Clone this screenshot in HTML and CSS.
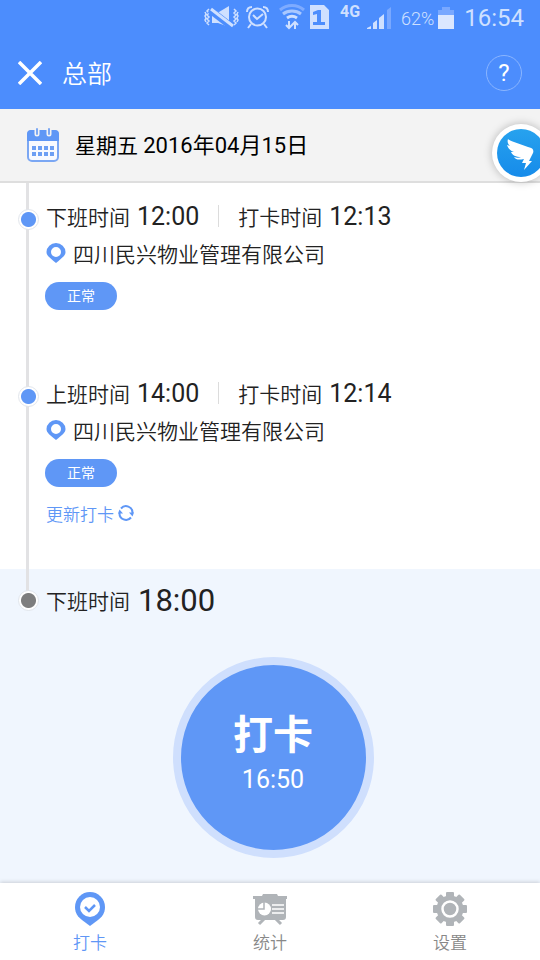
FILE: index.html
```html
<!DOCTYPE html>
<html lang="zh-CN">
<head>
<meta charset="utf-8">
<meta name="viewport" content="width=device-width, initial-scale=1">
<title>总部</title>
<link rel="stylesheet" href="styles.css">
</head>
<body>
<div class="app">
  <div class="status">
    <svg class="status-icons" width="200" height="36" viewBox="0 0 200 36" aria-hidden="true">
      <g fill="none" stroke="#cfe0ff" stroke-width="1.500">
        <path d="M14 9l-2 2 2 2-2 2 2 2-2 2 2 2-2 2 2 2M10 12l1 2-1 2 1 2-1 2 1 2"/>
        <path d="M39 9l2 2-2 2 2 2-2 2 2 2-2 2 2 2-2 2M43 12l-1 2 1 2-1 2 1 2-1 2"/>
      </g>
      <path d="M17 11v12h6l11 4V6l-10 6z" fill="#cfe0ff"/>
      <path d="M15 10l22 17" stroke="#4c8dfd" stroke-width="7"/>
      <path d="M16 9l22 17" stroke="#cfe0ff" stroke-width="3"/>
      <g fill="none" stroke="#cfe0ff" stroke-width="2">
        <circle cx="62.500" cy="17" r="8.500"/>
        <path d="M58 15l4 4 6-5M52 12c0-3 2-5 5-5M73 12c0-3-2-5-5-5M56 24l-3 4M69 24l3 4"/>
        <path d="M85 10c7-6 17-6 24 0" stroke="#7eabff" stroke-width="3"/>
        <path d="M88 14c5-4 13-4 18 0" stroke="#a9c8ff" stroke-width="3"/>
        <path d="M92 18c3-2 7-2 10 0" stroke-width="3"/>
        <path d="M94 21v7M91 25l3 3 3-3M100 29v-7M97 25l3-3 3 3"/>
      </g>
      <g fill="#cfe0ff">
        <path d="M115 29V5h14l5 5v19zM126 10h-3l-5 2v3l4-1v8h-4v3h12v-3h-4z" fill-rule="evenodd"/>
        <path d="M172 29v-1l4-2v3zM178 29v-6l4-3v9zM184 29V18l5-4v15z"/>
        <path d="M192 29V10l4-3v22z" fill="#79a8ff"/>
      </g>
      <text class="net" x="145" y="17">4G</text>
    </svg>
    <span class="percent">62%</span>
    <svg class="battery" width="16" height="24" viewBox="0 0 16 24" aria-hidden="true"><path d="M0 4h4V1h8v3h4v6H0z" fill="#79a8ff"/><path d="M0 9h16v14H0z" fill="#dbe7ff"/></svg>
    <span class="clock">16:54</span>
  </div>

  <header class="bar">
    <button class="icon-button" type="button" aria-label="关闭">
      <svg width="24" height="24" viewBox="0 0 24 24"><path d="M1 1l22 22M23 1L1 23" stroke="#fff" stroke-width="3.500"/></svg>
    </button>
    <h1>总部</h1>
    <button class="help" type="button" aria-label="帮助">?</button>
  </header>

  <div class="date">
    <svg width="32" height="34" viewBox="0 0 32 34" aria-hidden="true">
      <rect x="1" y="3" width="30" height="30" rx="4" fill="#f8faff" stroke="#7ba7f3" stroke-width="2"/>
      <path d="M0 13V6q0-4 4-4h24q4 0 4 4v7z" fill="#5f97f6"/>
      <path d="M10 1v5M22 1v5" stroke="#f3f3f3" stroke-width="5" stroke-linecap="round"/>
      <path d="M10 1v5M22 1v5" stroke="#7ba7f3" stroke-width="2" stroke-linecap="round"/>
      <path d="M5 20h4m2 0h4m2 0h4m2 0h4M5 26h4m2 0h4m2 0h4m2 0h4" stroke="#6d9ff4" stroke-width="4"/>
    </svg>
    <span class="day">星期五 <time datetime="2016-04-15">2016年04月15日</time></span>
    <button class="float" type="button" aria-label="钉钉">
      <svg width="48" height="48" viewBox="0 0 48 48">
        <defs><linearGradient id="sky" x1="0" y1="0" x2="0" y2="1"><stop offset="0" stop-color="#27a2ee"/><stop offset="1" stop-color="#168bea"/></linearGradient></defs>
        <circle cx="24" cy="24" r="24" fill="url(#sky)"/>
        <path d="M11 10c1 1 3 2 6 3l14 5c5 1 6 3 5 6l-4 8h3l-8 9 2-7h-4l2-4c-5 1-8 1-10-2 3 1 5 1 7 0-5 0-9-2-10-5l3 0c-4-1-6-4-7-7l3 1c-2-2-3-4-2-7z" fill="#fff"/>
      </svg>
    </button>
  </div>

  <main>
    <ol class="timeline">
      <li class="entry">
        <div class="rail"><span class="dot"></span></div>
        <div class="body">
          <div class="times"><span>下班时间</span><time>12:00</time><span class="split"></span><span>打卡时间</span><time>12:13</time></div>
          <div class="place"><svg width="20" height="20" viewBox="0 0 20 20" aria-hidden="true"><path d="M10 0a9.500 9 0 0 1 9.500 9c0 4-4 6-7 9l-2.500 2L7.500 18C4.500 15 .5 13 .5 9A9.500 9 0 0 1 10 0zM10 4a5 5 0 1 0 0 10 5 5 0 0 0 0-10z" fill="#5f97f6" fill-rule="evenodd"/></svg>四川民兴物业管理有限公司</div>
          <span class="tag">正常</span>
        </div>
      </li>
      <li class="entry">
        <div class="rail"><span class="dot"></span></div>
        <div class="body">
          <div class="times"><span>上班时间</span><time>14:00</time><span class="split"></span><span>打卡时间</span><time>12:14</time></div>
          <div class="place"><svg width="20" height="20" viewBox="0 0 20 20" aria-hidden="true"><path d="M10 0a9.500 9 0 0 1 9.500 9c0 4-4 6-7 9l-2.500 2L7.500 18C4.500 15 .5 13 .5 9A9.500 9 0 0 1 10 0zM10 4a5 5 0 1 0 0 10 5 5 0 0 0 0-10z" fill="#5f97f6" fill-rule="evenodd"/></svg>四川民兴物业管理有限公司</div>
          <span class="tag">正常</span>
          <button class="update" type="button">更新打卡<svg width="16" height="16" viewBox="0 0 16 16" aria-hidden="true"><path d="M3 3.500A6.500 6.500 0 0 1 14.500 8M13 12.500A6.500 6.500 0 0 1 1.500 8" fill="none" stroke="#5f97f6" stroke-width="2"/><path d="M11 7.500h5l-1.500 4zM5 8.500H0l1.500-4z" fill="#5f97f6"/></svg></button>
        </div>
      </li>
      <li class="entry next">
        <div class="rail"><span class="dot"></span></div>
        <div class="body">
          <div class="times"><span>下班时间</span><time>18:00</time></div>
        </div>
        <div class="punch-area">
          <button class="punch" type="button"><strong>打卡</strong><time>16:50</time></button>
        </div>
      </li>
    </ol>
  </main>

  <nav class="tabs">
    <a class="tab active" href="#punch">
      <svg width="34" height="36" viewBox="0 0 34 36" aria-hidden="true"><path d="M17 1a15 15 0 0 1 15 15c0 6-3 10-7 13l-8 6-8-6c-4-3-7-7-7-13A15 15 0 0 1 17 1z" fill="#5f97f6"/><circle cx="17" cy="16" r="10" fill="#fff"/><path d="M12 16l4 4 6-6" fill="none" stroke="#5f97f6" stroke-width="2.500"/></svg>
      <span>打卡</span>
    </a>
    <a class="tab" href="#stats">
      <svg width="34" height="36" viewBox="0 0 34 36" aria-hidden="true"><path d="M0 5h9l1-2h14l1 2h9v3h-1v18q0 3-3 3H5q-3 0-3-3V8H0z" fill="#b0b4b8"/><path d="M11 28l-5 5M23 28l5 5" stroke="#b0b4b8" stroke-width="3"/><circle cx="11.500" cy="18" r="6.500" fill="#fff"/><path d="M11 11v7H4" fill="none" stroke="#b0b4b8" stroke-width="1.500"/><path d="M19 14h12M19 18h12M19 22h12" stroke="#fff" stroke-width="1.500"/></svg>
      <span>统计</span>
    </a>
    <a class="tab" href="#settings">
      <svg width="34" height="36" viewBox="0 0 34 36" aria-hidden="true"><g fill="#b0b4b8"><circle cx="17" cy="18" r="13.500"/><g id="teeth"><rect x="13" y="1" width="8" height="34" rx="1"/><rect x="0" y="14" width="34" height="8" rx="1"/></g><use href="#teeth" transform="rotate(45 17 18)"/></g><circle cx="17" cy="18" r="7.500" fill="#b0b4b8" stroke="#fff" stroke-width="2.500"/></svg>
      <span>设置</span>
    </a>
  </nav>
</div>
</body>
</html>
```
FILE: styles.css
```css
* { box-sizing: border-box; }

body {
  margin: 0;
  font-family: Roboto, "Noto Sans CJK SC", sans-serif;
  color: #222;
  background: #fff;
}

button {
  border: 0;
  padding: 0;
  background: none;
  font: inherit;
  color: inherit;
}

svg { display: block; flex: none; }

.app {
  display: flex;
  flex-direction: column;
  min-height: 100vh;
  overflow: hidden;
}

.status {
  display: flex;
  align-items: center;
  justify-content: flex-end;
  height: 36px;
  padding-right: 16px;
  background: #4c8dfd;
  color: #cfe0ff;
}

.net { font-size: 16px; font-weight: 700; fill: #cfe0ff; }
.status-icons { margin-right: 6px; }
.percent { font-size: 18px; font-weight: 350; margin-right: 4px; }
.battery { margin-right: 10px; }
.clock { font-size: 24px; }

.bar {
  display: flex;
  align-items: center;
  height: 73px;
  padding: 0 18px;
  background: #4c8dfd;
  color: #fff;
}

h1 {
  flex: 1;
  margin: 0 0 2px 20px;
  font-size: 25px;
  font-weight: 350;
}

.help {
  width: 36px;
  height: 36px;
  border: 1px solid #8ab5ff;
  border-radius: 50%;
  font-size: 24px;
}

.date {
  position: relative;
  display: flex;
  align-items: center;
  gap: 16px;
  height: 74px;
  padding: 0 27px;
  border-bottom: 2px solid #dedede;
  background: #f3f3f3;
  color: #000;
  font-size: 21px;
}

.day { padding-bottom: 4px; }
.day time { font-size: 22px; }

.float {
  position: absolute;
  top: 15px;
  right: -10px;
  padding: 5px;
  border-radius: 50%;
  background: #fff;
  box-shadow: 0 0 8px rgba(0, 0, 0, 0.25);
}

main { flex: 1; display: flex; }

.timeline {
  flex: 1;
  display: flex;
  flex-direction: column;
  margin: 0;
  padding: 0;
  list-style: none;
}

.entry {
  display: grid;
  grid-template-columns: 46px 1fr;
}

.rail {
  display: flex;
  justify-content: center;
  padding: 26px 0 0 10px;
  background: linear-gradient(#e2e2e4, #e2e2e4) 26px 0 / 3px 100% no-repeat;
}

.dot {
  width: 21px;
  height: 21px;
  border: 1px solid #e2e6ec;
  border-radius: 50%;
  background: radial-gradient(circle, #5f97f6 7px, #fff 8px);
}

.body { padding: 14px 0 50px; }

.times {
  display: flex;
  align-items: center;
  gap: 7px;
  height: 38px;
  font-size: 21px;
  font-weight: 350;
}

.times time { font-size: 25px; font-weight: 400; }

.split {
  width: 1px;
  height: 22px;
  margin: 0 12px;
  background: #dcdcdc;
}

.place {
  display: flex;
  align-items: center;
  gap: 7px;
  height: 36px;
  font-size: 21px;
  font-weight: 350;
}

.tag {
  display: block;
  width: 72px;
  margin: 11px 0 0 -1px;
  border-radius: 14px;
  background: #5f97f6;
  color: #fff;
  font-size: 14px;
  line-height: 28px;
  text-align: center;
}

.update {
  display: flex;
  align-items: center;
  gap: 4px;
  height: 28px;
  margin-top: 12px;
  color: #5f97f6;
  font-size: 17px;
  font-weight: 350;
}

.entry:nth-child(2) .body { padding-bottom: 42px; }

.next {
  flex: 1;
  grid-template-rows: auto 1fr;
  background: #f0f6fe;
}

.next .rail { padding-top: 21px; background-size: 3px 24px; }
.next .dot { background: radial-gradient(circle, #7e7e7e 7px, #fff 8px); }
.next .body { padding: 12px 0 0; }
.next .times { gap: 8px; }
.next .times time { font-size: 31px; }

.punch-area {
  grid-column: 1 / -1;
  display: flex;
  justify-content: center;
  padding: 38px 0 24px 6px;
}

.punch {
  display: flex;
  flex-direction: column;
  align-items: center;
  justify-content: center;
  width: 201px;
  height: 201px;
  padding-bottom: 4px;
  border: 8px solid #cfdffd;
  border-radius: 50%;
  background: #5f97f6;
  color: #fff;
}

.punch strong { font-size: 40px; line-height: 48px; }
.punch time { font-size: 25px; line-height: 40px; }

.tabs {
  position: relative;
  display: flex;
  height: 77px;
  background: #fff;
  box-shadow: 0 -1px 4px rgba(0, 0, 0, 0.16);
}

.tab {
  flex: 1;
  display: flex;
  flex-direction: column;
  align-items: center;
  padding-top: 8px;
  color: #888;
  font-size: 17px;
  font-weight: 350;
  line-height: 32px;
  text-decoration: none;
}

.active { color: #5f97f6; }
```
